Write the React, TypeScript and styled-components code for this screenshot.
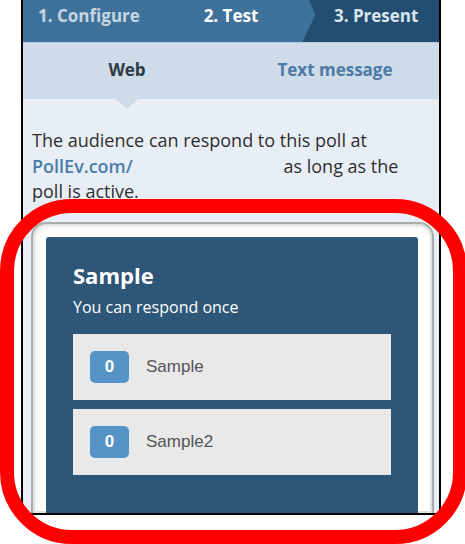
import styled, { createGlobalStyle } from "styled-components";

const GlobalStyle = createGlobalStyle`
  html, body {
    margin: 0;
    padding: 0;
    background: #ffffff;
  }
  body {
    font-family: "Open Sans", "DejaVu Sans", sans-serif;
  }
`;

const Canvas = styled.div`
  position: relative;
  width: 465px;
  height: 544px;
  overflow: hidden;
  background: #ffffff;
`;

const Shot = styled.div`
  display: flex;
  flex-direction: column;
  width: 416px;
  height: 513px;
  margin-left: 21px;
  border: 2px solid #000000;
  border-top: none;
  overflow: hidden;
  background: #e8eef5;
`;

const StepBar = styled.div`
  display: grid;
  grid-template-columns: repeat(3, 1fr);
  height: 42px;
  background: #3e729b;
  flex-shrink: 0;
`;

const Step = styled.div<{ $state: "done" | "current" | "next" }>`
  display: flex;
  align-items: center;
  justify-content: center;
  padding-bottom: 12px;
  font-size: 17px;
  font-weight: 700;
  color: ${({ $state }) =>
    $state === "current" ? "#ffffff" : $state === "next" ? "#dbe5ee" : "#c6d5e2"};
  background: ${({ $state }) => ($state === "next" ? "#234e71" : "transparent")};
  padding-left: ${({ $state }) => ($state === "next" ? "13px" : "0")};
  clip-path: ${({ $state }) =>
    $state === "next"
      ? "polygon(9px 0, 100% 0, 100% 100%, 2px 100%, 15px 15px)"
      : "none"};
  &:first-child {
    justify-content: flex-start;
    padding-left: 15px;
  }
`;

const TabBar = styled.div`
  display: flex;
  height: 56px;
  background: #cddce8;
  border-top: 1px solid #b9cddd;
  flex-shrink: 0;
`;

const Tab = styled.div<{ $active?: boolean }>`
  position: relative;
  flex: 1;
  display: flex;
  align-items: center;
  justify-content: center;
  padding-bottom: 3px;
  font-size: 17px;
  font-weight: 700;
  color: ${({ $active }) => ($active ? "#2c3a46" : "#4c7aa5")};
  &::after {
    content: "";
    display: ${({ $active }) => ($active ? "block" : "none")};
    position: absolute;
    left: 50%;
    bottom: -10px;
    margin-left: -11px;
    border-left: 11px solid transparent;
    border-right: 11px solid transparent;
    border-top: 10px solid #cddce8;
  }
`;

const Content = styled.div`
  flex: 1;
  display: flex;
  flex-direction: column;
  padding: 29px 5px 0 8px;
  min-height: 0;
`;

const Intro = styled.p`
  margin: 0 0 17px 1px;
  font-size: 18px;
  line-height: 25.5px;
  color: #2f2f2f;
`;

const PollLink = styled.span`
  color: #4a7caa;
  font-weight: 600;
`;

const Blank = styled.span`
  display: inline-block;
  width: 146px;
`;

const PhoneFrame = styled.div`
  flex: 1;
  display: flex;
  flex-direction: column;
  padding: 13px 14px 0 13px;
  background: #ffffff;
  border: 2px solid #ababab;
  border-bottom: none;
  border-radius: 15px 15px 0 0;
  box-shadow:
    inset 0 0 0 2px #e2e2e2,
    inset 3px 3px 6px rgba(0, 0, 0, 0.08);
`;

const PollCard = styled.div`
  flex: 1;
  display: flex;
  flex-direction: column;
  padding: 25px 27px 0;
  background: #2e5676;
  border-radius: 3px 3px 0 0;
  color: #ffffff;
`;

const PollTitle = styled.h2`
  margin: 0;
  font-size: 22px;
  line-height: 26px;
  font-weight: 700;
`;

const PollHint = styled.div`
  margin-top: 8px;
  font-size: 16px;
  line-height: 22px;
`;

const OptionList = styled.div`
  display: flex;
  flex-direction: column;
  gap: 9px;
  margin-top: 16px;
`;

const OptionRow = styled.div`
  display: flex;
  align-items: center;
  height: 66px;
  padding: 0 17px;
  background: #e9e9e9;
`;

const CountBadge = styled.span`
  display: flex;
  align-items: center;
  justify-content: center;
  width: 39px;
  height: 32px;
  border-radius: 5px;
  background: #5592c6;
  color: #ffffff;
  font-family: "Liberation Sans", Arial, sans-serif;
  font-size: 17px;
  font-weight: 700;
`;

const OptionLabel = styled.span`
  margin-left: 17px;
  font-family: "Liberation Sans", Arial, sans-serif;
  font-size: 17px;
  color: #555555;
`;

const Annotation = styled.div`
  position: absolute;
  left: 0;
  top: 199px;
  width: 467px;
  height: 345px;
  box-sizing: border-box;
  border: 14px solid #ff0000;
  border-radius: 72px;
  pointer-events: none;
`;

const options = [
  { count: 0, label: "Sample" },
  { count: 0, label: "Sample2" },
];

export default function App() {
  return (
    <>
      <GlobalStyle />
      <Canvas>
        <Shot>
          <StepBar>
            <Step $state="done">1. Configure</Step>
            <Step $state="current">2. Test</Step>
            <Step $state="next">3. Present</Step>
          </StepBar>
          <TabBar>
            <Tab $active>Web</Tab>
            <Tab>Text message</Tab>
          </TabBar>
          <Content>
            <Intro>
              The audience can respond to this poll at
              <br />
              <PollLink>PollEv.com/</PollLink>
              <Blank /> as long as the
              <br />
              poll is active.
            </Intro>
            <PhoneFrame>
              <PollCard>
                <PollTitle>Sample</PollTitle>
                <PollHint>You can respond once</PollHint>
                <OptionList>
                  {options.map((o) => (
                    <OptionRow key={o.label}>
                      <CountBadge>{o.count}</CountBadge>
                      <OptionLabel>{o.label}</OptionLabel>
                    </OptionRow>
                  ))}
                </OptionList>
              </PollCard>
            </PhoneFrame>
          </Content>
        </Shot>
        <Annotation />
      </Canvas>
    </>
  );
}
